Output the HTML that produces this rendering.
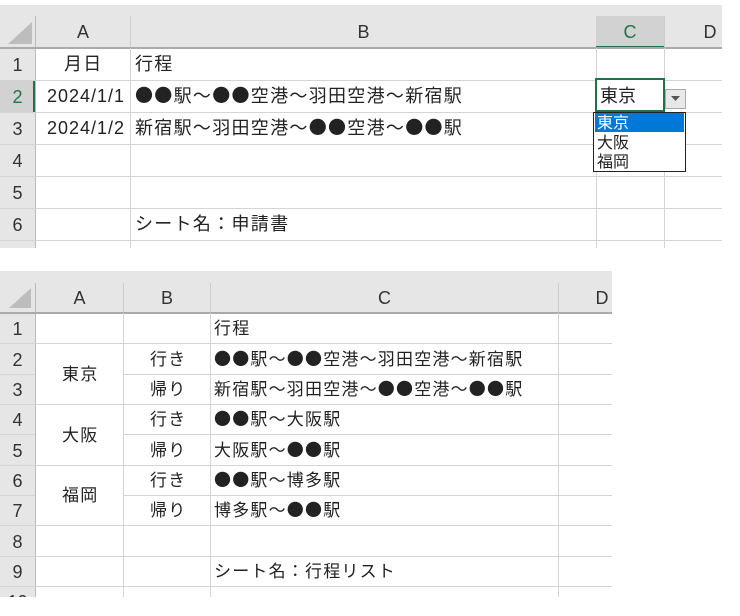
<!DOCTYPE html><html><head><meta charset="utf-8"><style>
body{margin:0;width:740px;height:616px;background:#fff;position:relative;overflow:hidden;font-family:"Liberation Sans","Noto Sans CJK JP",sans-serif;color:#222}
div{position:absolute;box-sizing:border-box}
.t{font-size:17px;white-space:nowrap;line-height:1}
.j{font-family:"Noto Sans CJK JP",sans-serif;font-size:18px;white-space:nowrap;line-height:1;letter-spacing:1.3px}
.k{font-family:"Noto Sans CJK JP",sans-serif;font-size:17px;white-space:nowrap;line-height:1;letter-spacing:1.2px}
.h{font-size:18px;color:#333;text-align:center}
</style></head><body>
<div style="left:0;top:5px;width:722px;height:43px;background:#e6e6e6"></div>
<div style="left:0;top:48px;width:35px;height:200px;background:#e6e6e6"></div>
<svg style="position:absolute;left:8px;top:22px" width="24" height="22"><polygon points="24,0 24,22 0,22" fill="#bdbdbd"/></svg>
<div style="left:35px;top:16px;width:1px;height:232px;background:#bbb"></div>
<div style="left:130px;top:16px;width:1px;height:32px;background:#ccc"></div>
<div style="left:596px;top:16px;width:68px;height:32px;background:#d2d2d2;border-bottom:2px solid #217346"></div>
<div style="left:664px;top:16px;width:1px;height:32px;background:#ccc"></div>
<div style="left:0;top:47px;width:722px;height:2px;background:#aaa"></div>
<div class="h" style="left:36px;top:22px;width:94px">A</div>
<div class="h" style="left:131px;top:22px;width:465px">B</div>
<div class="h" style="left:596px;top:22px;width:68px;color:#217346">C</div>
<div class="h" style="left:700px;top:22px;width:20px">D</div>
<div style="left:130px;top:48px;width:1px;height:200px;background:#d4d4d4"></div>
<div style="left:596px;top:48px;width:1px;height:200px;background:#d4d4d4"></div>
<div style="left:664px;top:48px;width:1px;height:200px;background:#d4d4d4"></div>
<div style="left:0;top:80px;width:722px;height:1px;background:#d4d4d4"></div>
<div style="left:0;top:112px;width:722px;height:1px;background:#d4d4d4"></div>
<div style="left:0;top:144px;width:722px;height:1px;background:#d4d4d4"></div>
<div style="left:0;top:176px;width:722px;height:1px;background:#d4d4d4"></div>
<div style="left:0;top:208px;width:722px;height:1px;background:#d4d4d4"></div>
<div style="left:0;top:240px;width:722px;height:1px;background:#d4d4d4"></div>
<div style="left:0;top:81px;width:35px;height:31px;background:#d2d2d2;border-right:2px solid #217346"></div>
<div class="h" style="left:0;top:55px;width:35px">1</div>
<div class="h" style="left:0;top:87px;width:35px;color:#217346">2</div>
<div class="h" style="left:0;top:119px;width:35px">3</div>
<div class="h" style="left:0;top:151px;width:35px">4</div>
<div class="h" style="left:0;top:183px;width:35px">5</div>
<div class="h" style="left:0;top:215px;width:35px">6</div>
<div class="j" style="left:64px;top:54px">月日</div>
<div class="j" style="left:135px;top:54px">行程</div>
<div class="t" style="left:47px;top:87px;font-size:18px;letter-spacing:1px">2024/1/1</div>
<div class="j" style="left:135px;top:86px">●●駅～●●空港～羽田空港～新宿駅</div>
<div class="t" style="left:47px;top:119px;font-size:18px;letter-spacing:1px">2024/1/2</div>
<div class="j" style="left:135px;top:118px">新宿駅～羽田空港～●●空港～●●駅</div>
<div class="j" style="left:135px;top:214px">シート名：申請書</div>
<div style="left:595px;top:78px;width:70px;height:34px;border:2px solid #217346;background:#fff"></div>
<div class="j" style="left:600px;top:86px;letter-spacing:0">東京</div>
<div style="left:665px;top:89px;width:21px;height:20px;background:#e8e8e8;border:1px solid #aaa"></div>
<svg style="position:absolute;left:671px;top:96px" width="9" height="6"><polygon points="0,0 9,0 4.5,5" fill="#555"/></svg>
<div style="left:593px;top:112px;width:93px;height:60px;border:1px solid #222;background:#fff"></div>
<div style="left:595px;top:113px;width:89px;height:19px;background:#0078d7"></div>
<div class="k" style="left:597px;top:113px;font-size:16px;letter-spacing:0;color:#fff">東京</div>
<div class="k" style="left:597px;top:133px;font-size:16px;letter-spacing:0">大阪</div>
<div class="k" style="left:597px;top:152px;font-size:16px;letter-spacing:0">福岡</div>
<div style="left:0;top:271px;width:612px;height:42px;background:#e6e6e6"></div>
<div style="left:0;top:313px;width:35px;height:284px;background:#e6e6e6"></div>
<svg style="position:absolute;left:9px;top:288px" width="22" height="20"><polygon points="22,0 22,20 0,20" fill="#bdbdbd"/></svg>
<div style="left:35px;top:283px;width:1px;height:314px;background:#bbb"></div>
<div style="left:123px;top:283px;width:1px;height:30px;background:#ccc"></div>
<div style="left:210px;top:283px;width:1px;height:30px;background:#ccc"></div>
<div style="left:558px;top:283px;width:1px;height:30px;background:#ccc"></div>
<div style="left:0;top:312px;width:612px;height:2px;background:#aaa"></div>
<div class="h" style="left:36px;top:288px;width:87px">A</div>
<div class="h" style="left:124px;top:288px;width:86px">B</div>
<div class="h" style="left:211px;top:288px;width:347px">C</div>
<div class="h" style="left:592px;top:288px;width:20px">D</div>
<div style="left:123px;top:313px;width:1px;height:284px;background:#d4d4d4"></div>
<div style="left:210px;top:313px;width:1px;height:284px;background:#d4d4d4"></div>
<div style="left:558px;top:313px;width:1px;height:284px;background:#d4d4d4"></div>
<div style="left:0;top:343px;width:612px;height:1px;background:#d4d4d4"></div>
<div style="left:0;top:374px;width:35px;height:1px;background:#d4d4d4"></div><div style="left:123px;top:374px;width:489px;height:1px;background:#d4d4d4"></div>
<div style="left:0;top:404px;width:612px;height:1px;background:#d4d4d4"></div>
<div style="left:0;top:434px;width:35px;height:1px;background:#d4d4d4"></div><div style="left:123px;top:434px;width:489px;height:1px;background:#d4d4d4"></div>
<div style="left:0;top:465px;width:612px;height:1px;background:#d4d4d4"></div>
<div style="left:0;top:495px;width:35px;height:1px;background:#d4d4d4"></div><div style="left:123px;top:495px;width:489px;height:1px;background:#d4d4d4"></div>
<div style="left:0;top:525px;width:612px;height:1px;background:#d4d4d4"></div>
<div style="left:0;top:556px;width:612px;height:1px;background:#d4d4d4"></div>
<div style="left:0;top:586px;width:612px;height:1px;background:#d4d4d4"></div>
<div class="h" style="left:0;top:319px;width:35px">1</div>
<div class="h" style="left:0;top:350px;width:35px">2</div>
<div class="h" style="left:0;top:380px;width:35px">3</div>
<div class="h" style="left:0;top:410px;width:35px">4</div>
<div class="h" style="left:0;top:441px;width:35px">5</div>
<div class="h" style="left:0;top:471px;width:35px">6</div>
<div class="h" style="left:0;top:501px;width:35px">7</div>
<div class="h" style="left:0;top:532px;width:35px">8</div>
<div class="h" style="left:0;top:562px;width:35px">9</div>
<div class="h" style="left:0;top:592px;width:35px">10</div>
<div class="k" style="left:62px;top:364px">東京</div>
<div class="k" style="left:62px;top:425px">大阪</div>
<div class="k" style="left:62px;top:485px">福岡</div>
<div class="k" style="left:150px;top:349px">行き</div>
<div class="k" style="left:150px;top:379px">帰り</div>
<div class="k" style="left:150px;top:409px">行き</div>
<div class="k" style="left:150px;top:440px">帰り</div>
<div class="k" style="left:150px;top:470px">行き</div>
<div class="k" style="left:150px;top:500px">帰り</div>
<div class="k" style="left:214px;top:318px">行程</div>
<div class="k" style="left:214px;top:349px">●●駅～●●空港～羽田空港～新宿駅</div>
<div class="k" style="left:214px;top:379px">新宿駅～羽田空港～●●空港～●●駅</div>
<div class="k" style="left:214px;top:409px">●●駅～大阪駅</div>
<div class="k" style="left:214px;top:440px">大阪駅～●●駅</div>
<div class="k" style="left:214px;top:470px">●●駅～博多駅</div>
<div class="k" style="left:214px;top:500px">博多駅～●●駅</div>
<div class="k" style="left:214px;top:561px">シート名：行程リスト</div>
<div style="left:0;top:597px;width:740px;height:19px;background:#fff"></div>
</body></html>
